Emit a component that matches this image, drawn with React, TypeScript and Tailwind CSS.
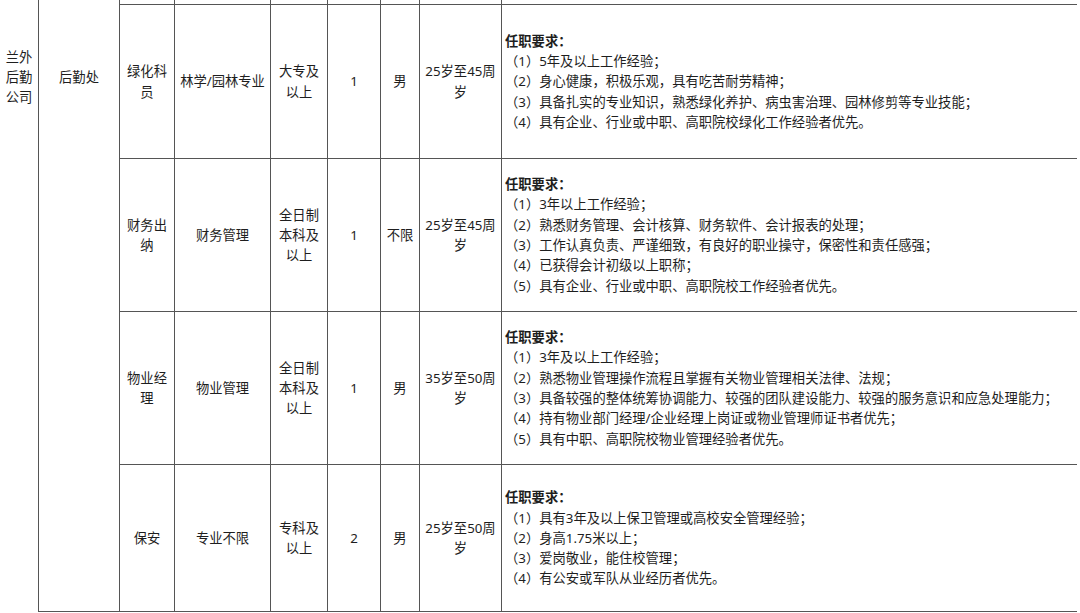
import React from "react";

type Row = {
  h: string;
  post: string[];
  major: string[];
  edu: string[];
  count: string;
  sex: string;
  age: string[];
  reqs: string[];
};

const rows: Row[] = [
  {
    h: "h-[154px]",
    post: ["绿化科", "员"],
    major: ["林学/园林专业"],
    edu: ["大专及", "以上"],
    count: "1",
    sex: "男",
    age: ["25岁至45周", "岁"],
    reqs: [
      "（1）5年及以上工作经验；",
      "（2）身心健康，积极乐观，具有吃苦耐劳精神；",
      "（3）具备扎实的专业知识，熟悉绿化养护、病虫害治理、园林修剪等专业技能；",
      "（4）具有企业、行业或中职、高职院校绿化工作经验者优先。",
    ],
  },
  {
    h: "h-[153px]",
    post: ["财务出", "纳"],
    major: ["财务管理"],
    edu: ["全日制", "本科及", "以上"],
    count: "1",
    sex: "不限",
    age: ["25岁至45周", "岁"],
    reqs: [
      "（1）3年以上工作经验；",
      "（2）熟悉财务管理、会计核算、财务软件、会计报表的处理；",
      "（3）工作认真负责、严谨细致，有良好的职业操守，保密性和责任感强；",
      "（4）已获得会计初级以上职称；",
      "（5）具有企业、行业或中职、高职院校工作经验者优先。",
    ],
  },
  {
    h: "h-[153px]",
    post: ["物业经", "理"],
    major: ["物业管理"],
    edu: ["全日制", "本科及", "以上"],
    count: "1",
    sex: "男",
    age: ["35岁至50周", "岁"],
    reqs: [
      "（1）3年及以上工作经验；",
      "（2）熟悉物业管理操作流程且掌握有关物业管理相关法律、法规；",
      "（3）具备较强的整体统筹协调能力、较强的团队建设能力、较强的服务意识和应急处理能力；",
      "（4）持有物业部门经理/企业经理上岗证或物业管理师证书者优先；",
      "（5）具有中职、高职院校物业管理经验者优先。",
    ],
  },
  {
    h: "h-[147px]",
    post: ["保安"],
    major: ["专业不限"],
    edu: ["专科及", "以上"],
    count: "2",
    sex: "男",
    age: ["25岁至50周", "岁"],
    reqs: [
      "（1）具有3年及以上保卫管理或高校安全管理经验；",
      "（2）身高1.75米以上；",
      "（3）爱岗敬业，能住校管理；",
      "（4）有公安或军队从业经历者优先。",
    ],
  },
];

const gridCols = "grid grid-cols-[55px_96px_57px_53px_39px_82px_575px]";

function Cell({ lines }: { lines: string[] }) {
  return (
    <div className="flex items-center justify-center border-r border-[#555] text-center whitespace-nowrap">
      <div>
        {lines.map((l, i) => (
          <div key={i}>{l}</div>
        ))}
      </div>
    </div>
  );
}

export default function App() {
  return (
    <div
      className="flex h-[613px] w-[1080px] overflow-hidden bg-white text-[13.3px] leading-[20.3px] text-[#1e1e1e]"
      style={{ fontFamily: '"Noto Sans", "Noto Sans CJK SC", sans-serif' }}
    >
      {/* 单位 */}
      <div className="h-[612px] w-[39px] shrink-0 border-r border-[#555] pt-[47px] text-center leading-[20px]">
        <div>兰外</div>
        <div>后勤</div>
        <div>公司</div>
      </div>
      {/* 部门 */}
      <div className="h-[612px] w-[81px] shrink-0 border-r border-b border-[#555] pt-[67px] text-center leading-[20px]">
        后勤处
      </div>

      <div className="flex h-[612px] w-[957px] shrink-0 flex-col">
        {/* 上一行残留 */}
        <div className={`${gridCols} h-[5px] border-b border-[#555]`}>
          {[0, 1, 2, 3, 4, 5].map((i) => (
            <div key={i} className="border-r border-[#555]" />
          ))}
          <div />
        </div>

        {rows.map((r, idx) => (
          <div key={idx} className={`${gridCols} ${r.h} border-b border-[#555]`}>
            <Cell lines={r.post} />
            <Cell lines={r.major} />
            <Cell lines={r.edu} />
            <Cell lines={[r.count]} />
            <Cell lines={[r.sex]} />
            <Cell lines={r.age} />
            <div className="flex items-center pl-[3px] whitespace-nowrap">
              <div>
                <div className="font-bold">任职要求：</div>
                {r.reqs.map((q, i) => (
                  <div key={i}>{q}</div>
                ))}
              </div>
            </div>
          </div>
        ))}
      </div>
    </div>
  );
}
